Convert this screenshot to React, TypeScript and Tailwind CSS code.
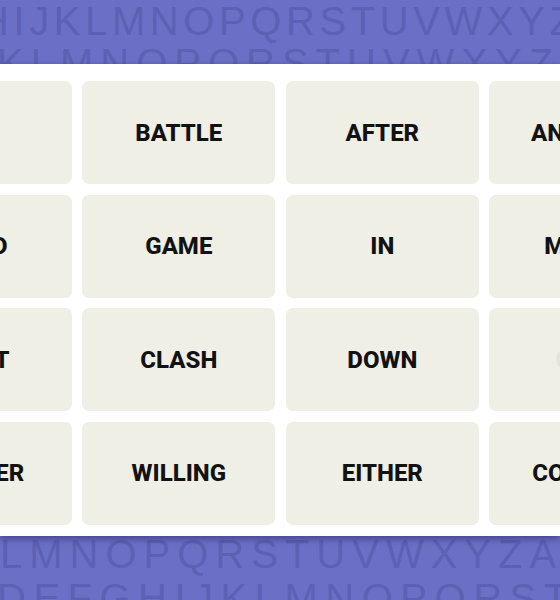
import React from 'react';

const TILES: { word: string; faint?: boolean }[] = [
  { word: 'TIFF' }, { word: 'BATTLE' }, { word: 'AFTER' }, { word: 'ANOTHER' },
  { word: 'HARD' }, { word: 'GAME' }, { word: 'IN' }, { word: 'MATCH' },
  { word: 'FIGHT' }, { word: 'CLASH' }, { word: 'DOWN' }, { word: 'COLD', faint: true },
  { word: 'NEITHER' }, { word: 'WILLING' }, { word: 'EITHER' }, { word: 'CONTEST' },
];

const PatternRow = ({ text, className = '' }: { text: string; className?: string }) => (
  <div
    className={`whitespace-nowrap text-[40px] text-[#5d61b3] font-['Liberation_Sans',Arial,sans-serif] ${className}`}
  >
    {text}
  </div>
);

export default function App() {
  return (
    <div className="w-full h-[600px] bg-[#6b70c6] overflow-hidden flex flex-col">
      {/* letters above the board */}
      <div className="h-[64px] shrink-0 overflow-hidden">
        <PatternRow text="HIJKLMNOPQRSTUVWXYZ" className="leading-[42px] ml-[-20px] tracking-[4.6px]" />
        <PatternRow text="KLMNOPQRSTUVWXYZ" className="leading-[42px] ml-[-3px] tracking-[7px]" />
      </div>

      {/* board */}
      <div className="relative z-10 shrink-0 bg-white pt-[17px] pb-[11.5px] overflow-hidden shadow-[0_3px_7px_rgba(35,35,90,0.55)]">
        <div className="grid grid-cols-[repeat(4,193px)] auto-rows-[103px] gap-x-[10.5px] gap-y-[10.5px] ml-[-121.2px] w-max">
          {TILES.map((t, i) => (
            <div
              key={i}
              className="flex items-center justify-center rounded-[7px] bg-[#efefe6]"
            >
              <span
                className={`font-['Roboto',Arial,sans-serif] text-[24px] font-extrabold leading-none ${
                  t.faint ? 'text-[#e3e3da]' : 'text-[#121212]'
                }`}
              >
                {t.word}
              </span>
            </div>
          ))}
        </div>
      </div>

      {/* letters below the board */}
      <div className="flex-1 overflow-hidden">
        <PatternRow text="LMNOPQRSTUVWXYZAB" className="leading-[36px] ml-[0px] tracking-[7px]" />
        <PatternRow text="DEFGHIJKLMNOPQRSTUV" className="leading-[52px] ml-[-3px] tracking-[7.5px]" />
      </div>
    </div>
  );
}
